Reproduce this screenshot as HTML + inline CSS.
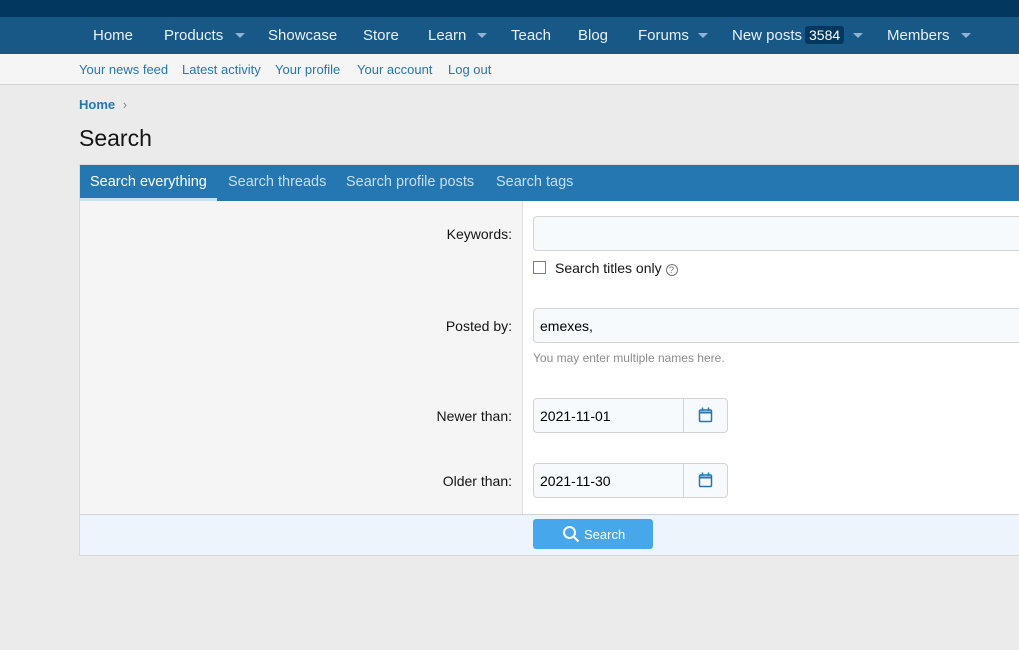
<!DOCTYPE html><html><head><style>
*{box-sizing:border-box;margin:0;padding:0}
body{width:1019px;height:650px;overflow:hidden;background:#ebebeb;font-family:"Liberation Sans",sans-serif;position:relative}
.a{position:absolute;white-space:nowrap}
.top{left:0;top:0;width:1019px;height:17px;background:#023860}
.nav{left:0;top:17px;width:1019px;height:37px;background:#185886}
.nav span{position:absolute;top:10px;font-size:15px;color:#e8f1f8}
.car{position:absolute;top:16px;width:0;height:0;border-left:5px solid transparent;border-right:5px solid transparent;border-top:5px solid #8fb4d3}
.sub{left:0;top:54px;width:1019px;height:31px;background:#f5f5f5;border-bottom:1px solid #d3d3d3}
.sub span{position:absolute;top:8px;font-size:13px;color:#2577b1}
.blk{left:79px;top:164px;width:960px;height:392px;border:1px solid #d8d8d8;background:#fff}
.tabs{position:absolute;left:0;top:0;width:100%;height:36px;background:#2577b1}
.tabs span{position:absolute;top:9px;font-size:14.5px;color:#c6def0}
.lab{font-size:14px;color:#141414;width:300px;text-align:right;left:212px}
.inp{background:#f7fafd;border:1px solid #d3d3d3;border-radius:4px}
</style></head><body>
<div class="a top"></div>
<div class="a nav">
<span style="left:93px">Home</span>
<span style="left:164px">Products</span><i class="car" style="left:235px"></i>
<span style="left:268px">Showcase</span>
<span style="left:363px">Store</span>
<span style="left:428px">Learn</span><i class="car" style="left:477px"></i>
<span style="left:511px">Teach</span>
<span style="left:578px">Blog</span>
<span style="left:638px">Forums</span><i class="car" style="left:698px"></i>
<span style="left:732px">New posts</span><span style="left:805px;top:9px;background:#023860;color:#fff;padding:1px 4px;border-radius:3px;font-size:14px">3584</span><i class="car" style="left:853px"></i>
<span style="left:887px">Members</span><i class="car" style="left:961px"></i>
</div>
<div class="a sub">
<span style="left:79px">Your news feed</span>
<span style="left:182px">Latest activity</span>
<span style="left:275px">Your profile</span>
<span style="left:357px">Your account</span>
<span style="left:448px">Log out</span>
</div>
<div class="a" style="left:79px;top:97px;font-size:13px;font-weight:bold;color:#2577b1">Home <span style="color:#888;font-weight:normal;margin-left:4px">›</span></div>
<div class="a" style="left:79px;top:125px;font-size:23px;color:#141414">Search</div>
<div class="a blk">
<div class="tabs">
<span style="left:0;top:0;height:36px;padding:9px 10px 0;color:#fff;border-bottom:3px solid #c6e0f3">Search everything</span>
<span style="left:148px">Search threads</span>
<span style="left:266px">Search profile posts</span>
<span style="left:416px">Search tags</span>
</div>
<div style="position:absolute;left:0;top:36px;width:443px;height:313px;background:#f5f5f5;border-right:1px solid #e0e0e0"></div>
<div style="position:absolute;left:0;top:349px;width:100%;height:41px;background:#edf4fb;border-top:1px solid #d3d3d3"></div>
</div>
<div class="a lab" style="top:226px">Keywords:</div>
<div class="a inp" style="left:533px;top:216px;width:500px;height:35px"></div>
<div class="a" style="left:533px;top:261px;width:13px;height:13px;border:1px solid #4a89c0;background:#fff"></div>
<div class="a" style="left:555px;top:260px;font-size:14px;color:#141414">Search titles only <span style="display:inline-block;width:12px;height:12px;border:1px solid #777;border-radius:50%;font-size:9px;text-align:center;line-height:11px;color:#777">?</span></div>
<div class="a lab" style="top:318px">Posted by:</div>
<div class="a inp" style="left:533px;top:308px;width:500px;height:35px;padding:9px 6px;font-size:14px">emexes,</div>
<div class="a" style="left:533px;top:351px;font-size:12px;color:#8c8c8c">You may enter multiple names here.</div>
<div class="a lab" style="top:408px">Newer than:</div>
<div class="a inp" style="left:533px;top:398px;width:195px;height:35px;padding:9px 6px;font-size:14px">2021-11-01</div>
<div class="a" style="left:683px;top:399px;width:1px;height:33px;background:#d3d3d3"></div>
<div class="a lab" style="top:473px">Older than:</div>
<div class="a inp" style="left:533px;top:463px;width:195px;height:35px;padding:9px 6px;font-size:14px">2021-11-30</div>
<div class="a" style="left:683px;top:464px;width:1px;height:33px;background:#d3d3d3"></div>
<svg class="a" style="left:698px;top:407px" width="15" height="16" viewBox="0 0 15 16"><rect x="1.5" y="3" width="12" height="11.5" rx="1" fill="none" stroke="#2577b1" stroke-width="1.5"/><path d="M1.5 5.5h12" stroke="#2577b1" stroke-width="2"/><path d="M4.5 0.5v3.5M10.5 0.5v3.5" stroke="#2577b1" stroke-width="1.5"/></svg>
<svg class="a" style="left:698px;top:472px" width="15" height="16" viewBox="0 0 15 16"><rect x="1.5" y="3" width="12" height="11.5" rx="1" fill="none" stroke="#2577b1" stroke-width="1.5"/><path d="M1.5 5.5h12" stroke="#2577b1" stroke-width="2"/><path d="M4.5 0.5v3.5M10.5 0.5v3.5" stroke="#2577b1" stroke-width="1.5"/></svg>
<div class="a" style="left:533px;top:519px;width:120px;height:30px;background:#47a7eb;border-radius:3px;color:#fff;font-size:13px;padding:8px 0 0 51px">Search</div>
<svg class="a" style="left:562px;top:525px" width="18" height="18" viewBox="0 0 18 18"><circle cx="7.5" cy="7.5" r="5.5" fill="none" stroke="#fff" stroke-width="2"/><path d="M11.5 11.5l5 5" stroke="#fff" stroke-width="2.2"/></svg>
</body></html>
